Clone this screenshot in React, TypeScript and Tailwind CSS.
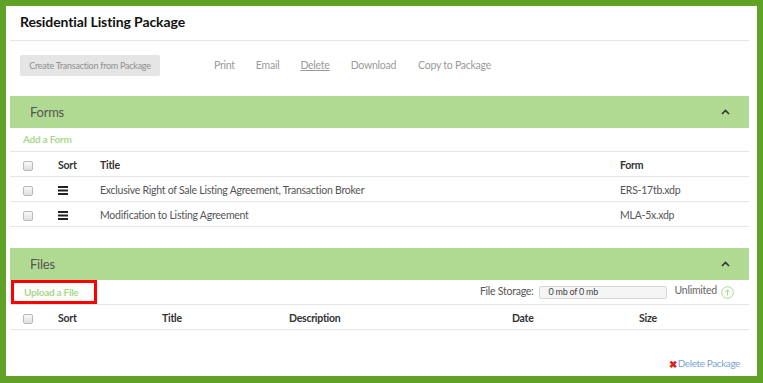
import React from "react";

const font = { fontFamily: "Lato, 'Noto Sans', sans-serif" };

function Box() {
  return (
    <span className="inline-block w-[10px] h-[10px] rounded-[2px] border border-[#b9b9b9] bg-gradient-to-b from-[#fafafa] to-[#dedede]" />
  );
}

function Bars() {
  return (
    <svg width="10" height="9" viewBox="0 0 10 9">
      <rect x="0" y="0" width="10" height="2" fill="#222" />
      <rect x="0" y="3.5" width="10" height="2" fill="#222" />
      <rect x="0" y="7" width="10" height="2" fill="#222" />
    </svg>
  );
}

function Chevron() {
  return (
    <svg width="9" height="6" viewBox="0 0 9 6" className="mr-[19px]">
      <path d="M1 5 L4.5 1.5 L8 5" fill="none" stroke="#333" strokeWidth="1.6" />
    </svg>
  );
}

function Bar({ label }: { label: string }) {
  return (
    <div className="flex items-center justify-between bg-[#b0d992] pl-[20px]">
      <span className="text-[13px] text-[#555] pt-[1px]">{label}</span>
      <Chevron />
    </div>
  );
}

export default function App() {
  return (
    <div style={font} className="w-[763px] h-[383px] bg-[#5fa226] pt-[6px] pl-[6px] pr-[6px] pb-[7px] tracking-[-0.25px]">
      <div className="h-full bg-white pl-[4px] pr-[8px] flex flex-col">
        {/* Title */}
        <div className="h-[35px] border-b border-[#e6e6e6] flex items-center pl-[10px] pb-[4px]">
          <h1 className="text-[14px] font-bold text-[#111] tracking-[-0.1px]">Residential Listing Package</h1>
        </div>

        {/* Toolbar */}
        <div className="h-[55px] flex items-start pt-[14px] pl-[10px] text-[10.5px] text-[#9a9a9a]">
          <button className="h-[21px] w-[140px] rounded-[2px] bg-[#e5e5e5] text-[9px] text-[#8f8f8f] whitespace-nowrap">
            Create Transaction from Package
          </button>
          <div className="flex h-[21px] items-center pt-[1px]">
            <span className="ml-[54px]">Print</span>
            <span className="ml-[21px]">Email</span>
            <span className="ml-[21px] underline">Delete</span>
            <span className="ml-[21px]">Download</span>
            <span className="ml-[22px]">Copy to Package</span>
          </div>
        </div>

        {/* Forms */}
        <div className="h-[32px] flex flex-col [&>div]:h-full">
          <Bar label="Forms" />
        </div>
        <div className="h-[24px] border-b border-[#e6e6e6] flex items-center pl-[13px]">
          <span className="text-[10px] font-bold text-[#a9d98c]">Add a Form</span>
        </div>
        <div className="text-[10.5px]">
          <div className="grid grid-cols-[48px_42px_520px_1fr] h-[25px] items-center border-b border-[#e6e6e6] font-bold text-[#333] pt-[3px]">
            <span className="pl-[13px] flex items-center"><Box /></span>
            <span>Sort</span>
            <span>Title</span>
            <span>Form</span>
          </div>
          {[
            ["Exclusive Right of Sale Listing Agreement, Transaction Broker", "ERS-17tb.xdp"],
            ["Modification to Listing Agreement", "MLA-5x.xdp"],
          ].map(([t, f]) => (
            <div key={f} className="grid grid-cols-[48px_42px_520px_1fr] h-[25px] items-center border-b border-[#e6e6e6] text-[#555] pt-[3px]">
              <span className="pl-[13px] flex items-center"><Box /></span>
              <span className="flex items-center"><Bars /></span>
              <span>{t}</span>
              <span>{f}</span>
            </div>
          ))}
        </div>

        {/* Files */}
        <div className="mt-[21px] h-[32px] flex flex-col [&>div]:h-full">
          <Bar label="Files" />
        </div>
        <div className="h-[25px] border-b border-[#e6e6e6] flex items-center text-[10.5px]">
          <div className="ml-[1px] h-[24px] w-[86px] border-[3px] border-[#ff0000] flex items-center pl-[10px]">
            <span className="text-[10px] font-bold text-[#a9d98c]">Upload a File</span>
          </div>
          <div className="ml-auto flex items-center text-[#555]">
            <span>File Storage:</span>
            <div className="ml-[5px] h-[13px] w-[128px] rounded-[2px] border border-[#d6d6d6] bg-[#f5f5f5] pl-[9px] flex items-center text-[9px] text-[#444]">
              0 mb of 0 mb
            </div>
            <span className="ml-[8px] -mt-[3px] text-[#666]">Unlimited</span>
            <svg width="13" height="13" viewBox="0 0 13 13" className="ml-[4px] mr-[15px]">
              <circle cx="6.5" cy="6.5" r="5.8" fill="none" stroke="#a9d98c" strokeWidth="1" />
              <path d="M6.5 9.5 V3.8 M4.3 6 L6.5 3.8 L8.7 6" fill="none" stroke="#a9d98c" strokeWidth="1" />
            </svg>
          </div>
        </div>
        <div className="grid grid-cols-[48px_104px_127px_223px_127px_1fr] h-[25px] items-center border-b border-[#e6e6e6] text-[10.5px] font-bold text-[#333] pt-[3px]">
          <span className="pl-[13px] flex items-center"><Box /></span>
          <span>Sort</span>
          <span>Title</span>
          <span>Description</span>
          <span>Date</span>
          <span>Size</span>
        </div>

        <div className="mt-auto mb-[5px] flex justify-end items-center pr-[9px] text-[10px] tracking-[-0.4px]">
          <span className="text-[#e0201b] font-bold text-[10px] leading-none mr-[1px]">✖</span>
          <span className="text-[#7aa6d3]">Delete Package</span>
        </div>
      </div>
    </div>
  );
}
